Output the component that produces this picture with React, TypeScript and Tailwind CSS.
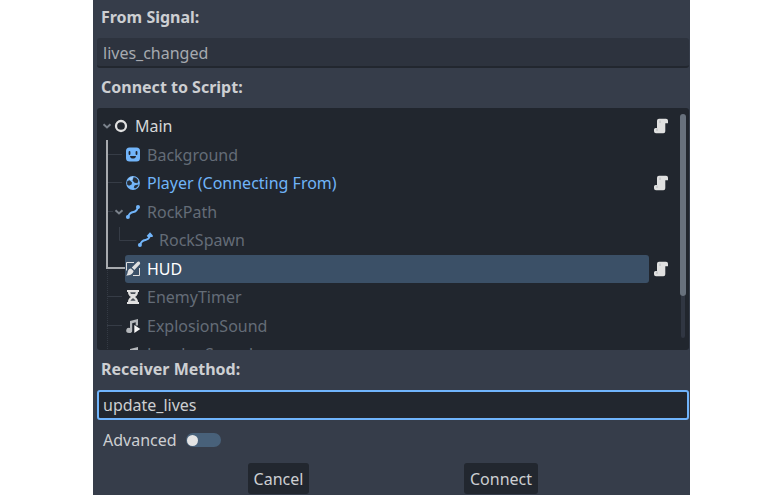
import type { ReactNode } from "react";

const BLUE = "#72b5fa";
const LIGHT = "#e0e0e0";

function Icon({ children }: { children: ReactNode }) {
  return (
    <svg viewBox="0 0 16 16" className="h-4 w-4 shrink-0">
      {children}
    </svg>
  );
}

const NodeIcon = () => (
  <Icon>
    <circle cx="8" cy="8" r="5" fill="none" stroke={LIGHT} strokeWidth="2.300" />
  </Icon>
);

const SpriteIcon = () => (
  <Icon>
    <rect x="1" y="0.5" width="14" height="14" rx="3.500" fill={BLUE} />
    <path d="M3.600 5a.9.9 0 0 1 1.800 0v2a.9.9 0 0 1-1.800 0zM10.600 5a.9.9 0 0 1 1.800 0v2a.9.9 0 0 1-1.800 0zM5 9h6c-.2 1.800-1.400 2.600-3 2.600S5.200 10.800 5 9z" fill="#22272f" />
  </Icon>
);

const BodyIcon = () => (
  <Icon>
    <circle cx="8" cy="8" r="6.900" fill={BLUE} />
    <path d="M2.400 6 4.600 5.200 7 7.500 6.600 9.600 4 10.800 2.300 9.800C1.900 8.500 1.900 7.200 2.400 6zM8.600 2.200c2.200.2 4 1.600 4.800 3.600l-1 2.400-2.900-.400-2-2.400zM9.800 10.200l3.800-.600c-.5 1.800-1.800 3.300-3.600 3.900l-1.300-1.300z" fill="#28303a" />
    <path d="M4.200 3 8 1.300 7 5 4.800 5z" fill="#9fcbf8" />
  </Icon>
);

const PathIcon = () => (
  <Icon>
    <path d="M3 13C4.500 8.500 6.500 8.300 8.500 8S12 6.500 13 3" fill="none" stroke={BLUE} strokeWidth="2" />
    <circle cx="2.900" cy="13" r="2" fill={BLUE} />
    <circle cx="13" cy="3" r="2" fill={BLUE} />
  </Icon>
);

const PathFollowIcon = () => (
  <Icon>
    <path d="M3 13C4.500 8.500 6.500 8.300 8.500 8S12 6.500 13 4" fill="none" stroke={BLUE} strokeWidth="2" />
    <circle cx="2.900" cy="13" r="2" fill={BLUE} />
    <path d="M13 .3 15.700 3.200V5H10.300V3.200z" fill={BLUE} />
  </Icon>
);

const CanvasIcon = () => (
  <Icon>
    <path d="M9 1.500H1.500V9.500M8 14.500h6.500V7" fill="none" stroke={LIGHT} strokeWidth="1" />
    <path d="M14.600 1c.9.9.7 1.800 0 2.500L9.400 9 6.800 6.500l5.500-5.400c.7-.7 1.600-.8 2.300-.1z" fill={LIGHT} />
    <path d="M6 7.400 8.600 9.900C8 13 5 14.500 1 14.500c1.500-1 1.400-2.200 1.800-4C3.300 8.600 4.400 7.400 6 7.400z" fill={LIGHT} />
  </Icon>
);

const TimerIcon = () => (
  <Icon>
    <path d="M2 1h12v2h-1c0 2.500-1.200 4-3 5 1.800 1 3 2.500 3 5h1v2H2v-2h1c0-2.500 1.200-4 3-5-1.800-1-3-2.500-3-5H2z" fill={LIGHT} />
    <path d="M5.200 3.300h5.600l-.7 1.700H5.900zM8 9.200c1.300.7 2.100 1.500 2.500 2.500h-5c.4-1 1.200-1.800 2.500-2.500z" fill="#4a5059" />
  </Icon>
);

const SoundIcon = () => (
  <Icon>
    <path d="M5 3 13 1v6.500h-2.300V4.300L7.200 5.200v7A3 2.600 0 1 1 5 9.900z" fill="#b4b7bb" />
    <path d="M9.300 7v8l6-4z" fill="#f5f5f5" />
  </Icon>
);

const ScriptIcon = () => (
  <Icon>
    <path d="M6 .8a2 2 0 0 0-2 2V10H2.500A1.500 1.500 0 0 0 1 11.500v1.700a2 2 0 0 0 2 2h7.300a2 2 0 0 0 2-2V5.300H15V2.800a2 2 0 0 0-2-2z" fill={LIGHT} />
    <path d="M7 2.500v2.500M4 10.500v2.500" stroke="#aeb2b7" strokeWidth=".8" />
  </Icon>
);

function Chevron() {
  return (
    <svg viewBox="0 0 10 10" className="h-[10px] w-[10px] shrink-0">
      <path d="M1.500 3.300 5 6.500 8.500 3.300" fill="none" stroke="#7a818b" strokeWidth="2" />
    </svg>
  );
}

type RowProps = {
  label: string;
  icon: ReactNode;
  indent: string;
  color?: string;
  open?: boolean;
  script?: boolean;
  selected?: boolean;
};

function Row({ label, icon, indent, color = "text-[#646c77]", open, script, selected }: RowProps) {
  return (
    <div className="flex h-[28.5px] shrink-0 items-center">
      <div className={`flex shrink-0 justify-end pr-[1px] ${indent}`}>{open && <Chevron />}</div>
      <div
        className={`flex h-full min-w-0 flex-1 items-center gap-[6px] rounded-[3px] ${selected ? "bg-[#3b5067]" : ""} ${color}`}
      >
        {icon}
        <span className="whitespace-nowrap">{label}</span>
      </div>
      <div className="ml-1 flex w-[16px] shrink-0">{script && <ScriptIcon />}</div>
    </div>
  );
}

function Guides() {
  return (
    <svg className="pointer-events-none absolute left-0 top-0 h-[242px] w-[40px]" viewBox="0 0 40 242" fill="none">
      <path d="M10.500 162v80" stroke="#343a44" strokeDasharray="1 1" />
      <path d="M10 46.500h15M10 74.500h15M10 103.500h6M22.500 119v13.500h17M10 188.500h15M10 217.500h15" stroke="#363c46" />
      <path d="M10 32v128h18" stroke="#a7aaae" strokeWidth="2" />
    </svg>
  );
}

export default function App() {
  return (
    <div className="h-[495px] w-[784px] overflow-hidden bg-white">
      <div className="ml-[93px] flex h-full w-[597px] flex-col bg-[#363d4a] pl-1 pr-px font-['Noto_Sans',sans-serif] text-[16px] leading-none text-[#cdcfd2]">
        <div className="flex h-[38px] items-center pb-[4px] pl-1 font-bold">From Signal:</div>
        <div className="flex h-[30px] items-center rounded-[3px] border-b-2 border-[#22272f] bg-[#2d333e] pl-[6px] pt-px text-[#a6aab0]">
          lives_changed
        </div>
        <div className="flex h-[40px] items-center pl-1 pb-[2px] font-bold">Connect to Script:</div>
        <div className="relative flex h-[242px] overflow-hidden rounded-[3px] bg-[#21262e]">
          <Guides />
          <div className="flex min-w-0 flex-1 flex-col pt-[4px]">
            <Row label="Main" icon={<NodeIcon />} indent="w-[16px]" color="text-[#d5d7d9]" open script />
            <Row label="Background" icon={<SpriteIcon />} indent="w-[28px]" />
            <Row label="Player (Connecting From)" icon={<BodyIcon />} indent="w-[28px]" color="text-[#70b4f8]" script />
            <Row label="RockPath" icon={<PathIcon />} indent="w-[28px]" open />
            <Row label="RockSpawn" icon={<PathFollowIcon />} indent="w-[40px]" />
            <Row label="HUD" icon={<CanvasIcon />} indent="w-[28px]" color="text-white" script selected />
            <Row label="EnemyTimer" icon={<TimerIcon />} indent="w-[28px]" />
            <Row label="ExplosionSound" icon={<SoundIcon />} indent="w-[28px]" />
            <Row label="LevelupSound" icon={<SoundIcon />} indent="w-[28px]" />
          </div>
          <div className="ml-[11px] mr-[3px] flex w-[6px] flex-col items-center pt-[6px]">
            <div className="h-[182px] w-[6px] shrink-0 rounded-full bg-[#68717d]" />
            <div className="h-[42px] w-[4px] rounded-b-full bg-[#303642]" />
          </div>
        </div>
        <div className="flex h-[40px] items-center pl-1 pb-[2px] font-bold">Receiver Method:</div>
        <div className="flex h-[30px] items-center rounded-[3px] border-2 border-[#70b4fc] bg-[#22272f] pl-1">
          update_lives
        </div>
        <div className="flex h-[43px] items-center gap-[9px] pb-[3px] pl-[6px]">
          <span>Advanced</span>
          <div className="flex h-[14px] w-[35px] items-center rounded-full bg-[#48617a] pl-px">
            <div className="h-[11px] w-[11px] rounded-full bg-[#e4e4e4]" />
          </div>
        </div>
        <div className="flex h-[31px] pl-[151px]">
          <button className="flex w-[61px] items-center justify-center rounded-[3px] bg-[#22272f]">Cancel</button>
          <button className="ml-[155px] flex w-[74px] items-center justify-center rounded-[3px] bg-[#22272f]">
            Connect
          </button>
        </div>
      </div>
    </div>
  );
}
